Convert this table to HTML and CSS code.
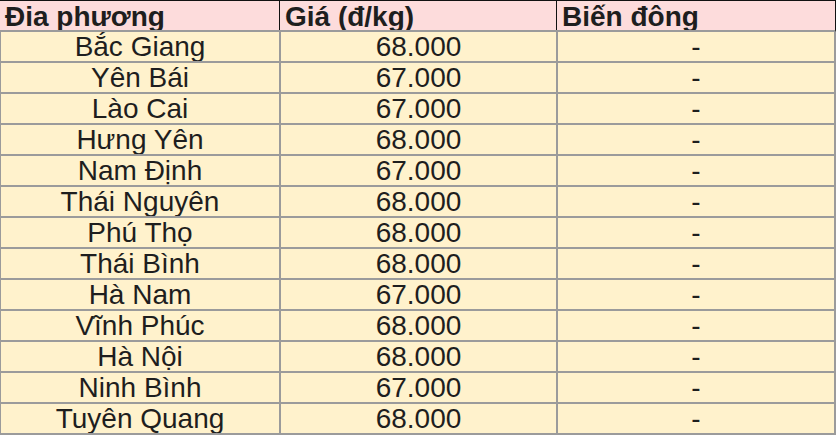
FILE: index.html
```html
<!DOCTYPE html>
<html lang="vi">
<head>
<meta charset="utf-8">
<link rel="stylesheet" href="styles.css">
</head>
<body>
<div class="price-table">
  <div class="head">
    <div class="hcell">Đia phương</div>
    <div class="hcell">Giá (đ/kg)</div>
    <div class="hcell">Biến đông</div>
  </div>
  <div class="body">
    <div class="cell">Bắc Giang</div><div class="cell">68.000</div><div class="cell">-</div>
    <div class="cell">Yên Bái</div><div class="cell">67.000</div><div class="cell">-</div>
    <div class="cell">Lào Cai</div><div class="cell">67.000</div><div class="cell">-</div>
    <div class="cell">Hưng Yên</div><div class="cell">68.000</div><div class="cell">-</div>
    <div class="cell">Nam Định</div><div class="cell">67.000</div><div class="cell">-</div>
    <div class="cell">Thái Nguyên</div><div class="cell">68.000</div><div class="cell">-</div>
    <div class="cell">Phú Thọ</div><div class="cell">68.000</div><div class="cell">-</div>
    <div class="cell">Thái Bình</div><div class="cell">68.000</div><div class="cell">-</div>
    <div class="cell">Hà Nam</div><div class="cell">67.000</div><div class="cell">-</div>
    <div class="cell">Vĩnh Phúc</div><div class="cell">68.000</div><div class="cell">-</div>
    <div class="cell">Hà Nội</div><div class="cell">68.000</div><div class="cell">-</div>
    <div class="cell">Ninh Bình</div><div class="cell">67.000</div><div class="cell">-</div>
    <div class="cell">Tuyên Quang</div><div class="cell">68.000</div><div class="cell">-</div>
  </div>
</div>
</body>
</html>
```
FILE: styles.css
```css
html, body {
  margin: 0;
  padding: 0;
  background: #ffffff;
}
.price-table {
  width: 836px;
  font-family: "Liberation Sans", Arial, sans-serif;
  color: #1e1e1e;
}
.head {
  display: grid;
  grid-template-columns: 279px 276px 278px;
  column-gap: 1px;
  background: #111111;
  border-top: 1px solid #111111;
  border-right: 1px solid #111111;
  border-bottom: 2px solid #9b9b9b;
}
.hcell {
  background: #fddcdc;
  height: 29px;
  line-height: 31px;
  font-size: 28px;
  font-weight: bold;
  padding-left: 5px;
  white-space: nowrap;
  overflow: hidden;
}
.body {
  display: grid;
  grid-template-columns: 278px 275px 276px;
  grid-auto-rows: 29px;
  gap: 2px;
  background: #9b9b9b;
  padding: 0 2px 2px 1px;
}
.cell {
  background: #fff2cc;
  text-align: center;
  font-size: 28px;
  line-height: 29px;
  white-space: nowrap;
  overflow: hidden;
}
```
